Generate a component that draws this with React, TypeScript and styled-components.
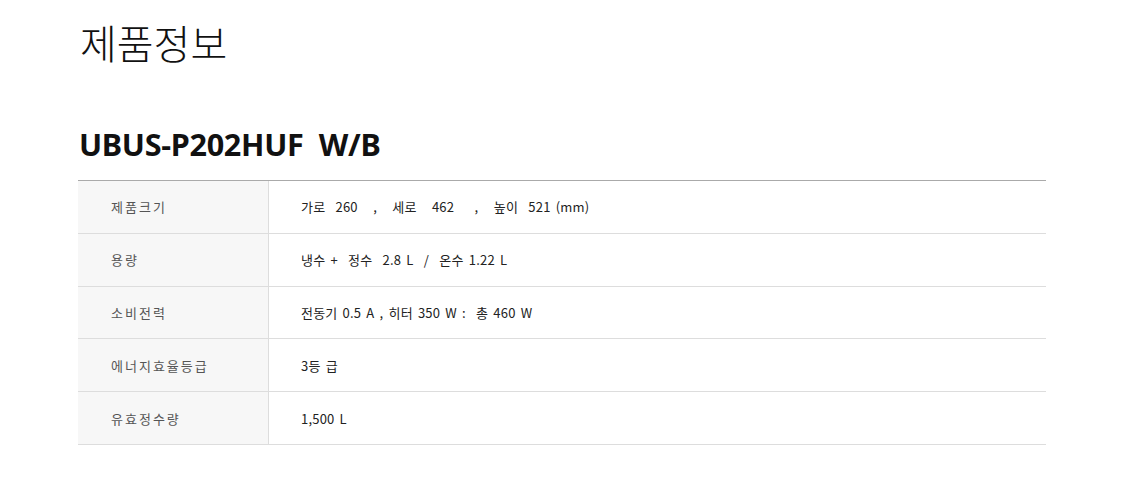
import React from 'react'
import styled, { createGlobalStyle } from 'styled-components'

const GlobalStyle = createGlobalStyle`
  body {
    margin: 0;
    background: #fff;
    font-family: 'Noto Sans CJK KR', 'Noto Sans', sans-serif;
    color: #222;
  }
`

const specs = [
  { label: '제품크기', value: '가로  260   ,   세로   462    ,   높이  521 (mm)' },
  { label: '용량', value: '냉수 +  정수  2.8 L  /  온수 1.22 L' },
  { label: '소비전력', value: '전동기 0.5 A , 히터 350 W :  총 460 W' },
  { label: '에너지효율등급', value: '3등 급' },
  { label: '유효정수량', value: '1,500 L' },
]

const App = () => {
  return (
    <Wrapper>
      <GlobalStyle />
      <Title>제품정보</Title>
      <Model>UBUS-P202HUF&nbsp;&nbsp;W/B</Model>
      <Table>
        {specs.map(({ label, value }) => (
          <Row key={label}>
            <Label>{label}</Label>
            <Value>{value}</Value>
          </Row>
        ))}
      </Table>
    </Wrapper>
  )
}

export default App

const Wrapper = styled.div`
  width: 968px;
  padding: 0 0 0 78px;
`

const Title = styled.h1`
  margin: 0;
  padding: 14px 0 0 2px;
  font-size: 40px;
  font-weight: 300;
  line-height: 56px;
  color: #111;
`

const Model = styled.h2`
  margin: 0;
  padding: 54px 0 0 1px;
  font-family: 'Noto Sans', 'Noto Sans CJK KR', sans-serif;
  font-size: 30.6px;
  font-weight: 700;
  line-height: 40px;
  color: #111;
  letter-spacing: -0.3px;
`

const Table = styled.div`
  margin-top: 16px;
  border-top: 1px solid #aaa;
  display: flex;
  flex-direction: column;
`

const Row = styled.div`
  display: grid;
  grid-template-columns: 191px 1fr;
  height: 52.8px;
  box-sizing: border-box;
  border-bottom: 1px solid #ddd;
  font-size: 13px;
`

const Label = styled.div`
  display: flex;
  align-items: center;
  padding-left: 33px;
  background: #f7f7f7;
  border-right: 1px solid #ddd;
  color: #555;
  letter-spacing: 2px;
`

const Value = styled.div`
  display: flex;
  align-items: center;
  padding-left: 32px;
  color: #222;
  white-space: pre;
  letter-spacing: 0.2px;
  word-spacing: 2px;
`
